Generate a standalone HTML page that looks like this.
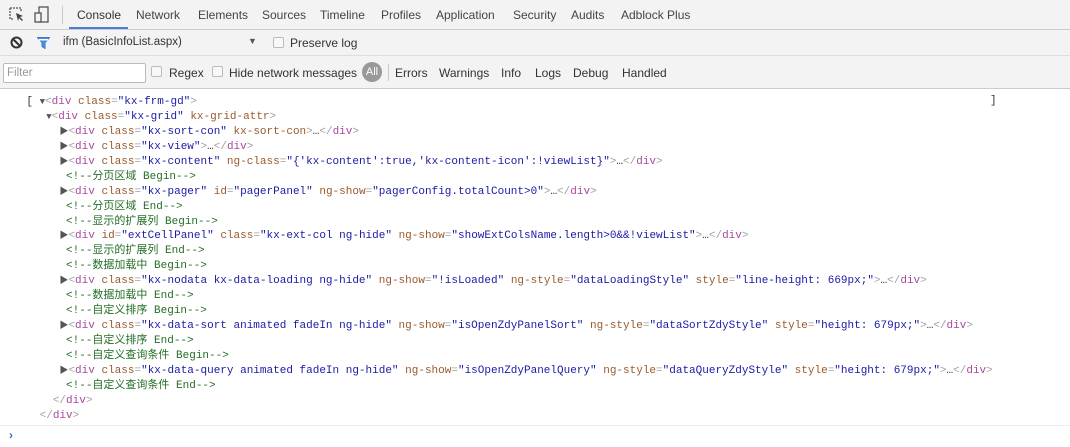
<!DOCTYPE html>
<html><head><meta charset="utf-8"><style>
*{margin:0;padding:0;box-sizing:border-box}
body{width:1070px;height:447px;overflow:hidden;background:#fff;font-family:"Liberation Sans","Noto Sans CJK SC",sans-serif;font-size:12px;color:#333;position:relative}
.bar1{position:absolute;left:0;top:0;width:1070px;height:30px;background:#f3f3f3;border-bottom:1px solid #ccc}
.bar2{position:absolute;left:0;top:30px;width:1070px;height:26px;background:#f3f3f3;border-bottom:1px solid #ddd}
.bar3{position:absolute;left:0;top:56px;width:1070px;height:33px;background:#f3f3f3;border-bottom:1px solid #ccc}
.t{position:absolute;white-space:nowrap;color:#333}
.cb{position:absolute;width:11px;height:11px;border:1px solid #bbb;background:#f8f8f8;border-radius:2px}
.code{position:absolute;left:0;top:95px;font-family:"Liberation Mono","Noto Sans CJK SC",monospace;font-size:11px;line-height:14.95px}
.l{position:relative;height:14.95px;white-space:pre}
.tg{color:#a8499f}.an{color:#9a5a2a}.av{color:#1a1aa6}.cm{color:#236e25}.br{color:#a0a0a0}
.ar{color:#555;font-size:9px}
</style></head><body>
<div class="bar1"></div>
<div class="bar2"></div>
<div class="bar3"></div>
<svg style="position:absolute;left:9px;top:7px" width="16" height="16" viewBox="0 0 16 16"><path d="M1 1h11v4M1 1v11h4" fill="none" stroke="#555" stroke-width="1.3" stroke-dasharray="2 1"/><path d="M7 6l7 3-3 1 3 3-1 1-3-3-1 3z" fill="#444"/></svg>
<svg style="position:absolute;left:34px;top:6px" width="16" height="18" viewBox="0 0 16 18"><rect x="5" y="1" width="9" height="15" fill="none" stroke="#555" stroke-width="1.3"/><rect x="1" y="7" width="6" height="9" fill="#f3f3f3" stroke="#555" stroke-width="1.3"/></svg>
<div style="position:absolute;left:62px;top:6px;width:1px;height:18px;background:#ccc"></div>
<div class="t" style="left:77px;top:8px">Console</div>
<div style="position:absolute;left:69px;top:27px;width:59px;height:2px;background:#4b7fd6"></div>
<div class="t" style="left:136px;top:8px;color:#444">Network</div>
<div class="t" style="left:198px;top:8px;color:#444">Elements</div>
<div class="t" style="left:262px;top:8px;color:#444">Sources</div>
<div class="t" style="left:320px;top:8px;color:#444">Timeline</div>
<div class="t" style="left:381px;top:8px;color:#444">Profiles</div>
<div class="t" style="left:436px;top:8px;color:#444">Application</div>
<div class="t" style="left:513px;top:8px;color:#444">Security</div>
<div class="t" style="left:571px;top:8px;color:#444">Audits</div>
<div class="t" style="left:621px;top:8px;color:#444">Adblock Plus</div>
<svg style="position:absolute;left:10px;top:36px" width="13" height="13" viewBox="0 0 13 13"><circle cx="6.5" cy="6.5" r="5" fill="none" stroke="#333" stroke-width="2"/><path d="M3 3l7 7" stroke="#333" stroke-width="2"/></svg>
<svg style="position:absolute;left:37px;top:37px" width="13" height="12" viewBox="0 0 13 12"><path d="M0.5 0.5h12l-4.5 5v6l-3-2v-4z" fill="#4a90e2" stroke="#3a7bd0"/><rect x="2" y="2" width="9" height="1.5" fill="#fff"/></svg>
<div class="t" style="left:63px;top:36px;font-size:11.5px">ifm (BasicInfoList.aspx)</div>
<div class="t" style="left:248px;top:36px;font-size:9px;color:#555">▼</div>
<div class="cb" style="left:273px;top:37px"></div>
<div class="t" style="left:290px;top:36px">Preserve log</div>
<div style="position:absolute;left:3px;top:63px;width:143px;height:20px;border:1px solid #bbb;background:#fff;border-radius:2px"></div>
<div class="t" style="left:7px;top:67px;color:#999;font-size:11.5px">Filter</div>
<div class="cb" style="left:151px;top:66px"></div>
<div class="t" style="left:169px;top:66px">Regex</div>
<div class="cb" style="left:212px;top:66px"></div>
<div class="t" style="left:229px;top:66px">Hide network messages</div>
<div style="position:absolute;left:362px;top:62px;width:20px;height:20px;border-radius:10px;background:#999;color:#fff;font-size:11px;text-align:center;line-height:20px">All</div>
<div style="position:absolute;left:388px;top:64px;width:1px;height:17px;background:#ccc"></div>
<div class="t" style="left:395px;top:66px">Errors</div>
<div class="t" style="left:439px;top:66px">Warnings</div>
<div class="t" style="left:501px;top:66px">Info</div>
<div class="t" style="left:535px;top:66px">Logs</div>
<div class="t" style="left:573px;top:66px">Debug</div>
<div class="t" style="left:622px;top:66px">Handled</div>
<div class="t" style="left:990px;top:95px;font-family:'Liberation Mono',monospace;font-size:11px">]</div>
<div class="code"><div class="l">    [ <span class="ar">▼</span><span class="br">&lt;</span><span class="tg">div</span> <span class="an">class</span><span class="br">=</span><span class="av">"kx-frm-gd"</span><span class="br">&gt;</span></div><div class="l">       <span class="ar">▼</span><span class="br">&lt;</span><span class="tg">div</span> <span class="an">class</span><span class="br">=</span><span class="av">"kx-grid"</span> <span class="an">kx-grid-attr</span><span class="br">&gt;</span></div><div class="l">         <span class="ar">▶</span><span class="br">&lt;</span><span class="tg">div</span> <span class="an">class</span><span class="br">=</span><span class="av">"kx-sort-con"</span> <span class="an">kx-sort-con</span><span class="br">&gt;</span>…<span class="br">&lt;/</span><span class="tg">div</span><span class="br">&gt;</span></div><div class="l">         <span class="ar">▶</span><span class="br">&lt;</span><span class="tg">div</span> <span class="an">class</span><span class="br">=</span><span class="av">"kx-view"</span><span class="br">&gt;</span>…<span class="br">&lt;/</span><span class="tg">div</span><span class="br">&gt;</span></div><div class="l">         <span class="ar">▶</span><span class="br">&lt;</span><span class="tg">div</span> <span class="an">class</span><span class="br">=</span><span class="av">"kx-content"</span> <span class="an">ng-class</span><span class="br">=</span><span class="av">"{'kx-content':true,'kx-content-icon':!viewList}"</span><span class="br">&gt;</span>…<span class="br">&lt;/</span><span class="tg">div</span><span class="br">&gt;</span></div><div class="l">          <span class="cm">&lt;!--分页区域 Begin--&gt;</span></div><div class="l">         <span class="ar">▶</span><span class="br">&lt;</span><span class="tg">div</span> <span class="an">class</span><span class="br">=</span><span class="av">"kx-pager"</span> <span class="an">id</span><span class="br">=</span><span class="av">"pagerPanel"</span> <span class="an">ng-show</span><span class="br">=</span><span class="av">"pagerConfig.totalCount&gt;0"</span><span class="br">&gt;</span>…<span class="br">&lt;/</span><span class="tg">div</span><span class="br">&gt;</span></div><div class="l">          <span class="cm">&lt;!--分页区域 End--&gt;</span></div><div class="l">          <span class="cm">&lt;!--显示的扩展列 Begin--&gt;</span></div><div class="l">         <span class="ar">▶</span><span class="br">&lt;</span><span class="tg">div</span> <span class="an">id</span><span class="br">=</span><span class="av">"extCellPanel"</span> <span class="an">class</span><span class="br">=</span><span class="av">"kx-ext-col ng-hide"</span> <span class="an">ng-show</span><span class="br">=</span><span class="av">"showExtColsName.length&gt;0&amp;&amp;!viewList"</span><span class="br">&gt;</span>…<span class="br">&lt;/</span><span class="tg">div</span><span class="br">&gt;</span></div><div class="l">          <span class="cm">&lt;!--显示的扩展列 End--&gt;</span></div><div class="l">          <span class="cm">&lt;!--数据加载中 Begin--&gt;</span></div><div class="l">         <span class="ar">▶</span><span class="br">&lt;</span><span class="tg">div</span> <span class="an">class</span><span class="br">=</span><span class="av">"kx-nodata kx-data-loading ng-hide"</span> <span class="an">ng-show</span><span class="br">=</span><span class="av">"!isLoaded"</span> <span class="an">ng-style</span><span class="br">=</span><span class="av">"dataLoadingStyle"</span> <span class="an">style</span><span class="br">=</span><span class="av">"line-height: 669px;"</span><span class="br">&gt;</span>…<span class="br">&lt;/</span><span class="tg">div</span><span class="br">&gt;</span></div><div class="l">          <span class="cm">&lt;!--数据加载中 End--&gt;</span></div><div class="l">          <span class="cm">&lt;!--自定义排序 Begin--&gt;</span></div><div class="l">         <span class="ar">▶</span><span class="br">&lt;</span><span class="tg">div</span> <span class="an">class</span><span class="br">=</span><span class="av">"kx-data-sort animated fadeIn ng-hide"</span> <span class="an">ng-show</span><span class="br">=</span><span class="av">"isOpenZdyPanelSort"</span> <span class="an">ng-style</span><span class="br">=</span><span class="av">"dataSortZdyStyle"</span> <span class="an">style</span><span class="br">=</span><span class="av">"height: 679px;"</span><span class="br">&gt;</span>…<span class="br">&lt;/</span><span class="tg">div</span><span class="br">&gt;</span></div><div class="l">          <span class="cm">&lt;!--自定义排序 End--&gt;</span></div><div class="l">          <span class="cm">&lt;!--自定义查询条件 Begin--&gt;</span></div><div class="l">         <span class="ar">▶</span><span class="br">&lt;</span><span class="tg">div</span> <span class="an">class</span><span class="br">=</span><span class="av">"kx-data-query animated fadeIn ng-hide"</span> <span class="an">ng-show</span><span class="br">=</span><span class="av">"isOpenZdyPanelQuery"</span> <span class="an">ng-style</span><span class="br">=</span><span class="av">"dataQueryZdyStyle"</span> <span class="an">style</span><span class="br">=</span><span class="av">"height: 679px;"</span><span class="br">&gt;</span>…<span class="br">&lt;/</span><span class="tg">div</span><span class="br">&gt;</span></div><div class="l">          <span class="cm">&lt;!--自定义查询条件 End--&gt;</span></div><div class="l">        <span class="br">&lt;/</span><span class="tg">div</span><span class="br">&gt;</span></div><div class="l">      <span class="br">&lt;/</span><span class="tg">div</span><span class="br">&gt;</span></div></div>
<div style="position:absolute;left:0;top:425px;width:1070px;height:1px;background:#eee"></div>
<div class="t" style="left:9px;top:428px;color:#3d6fc7;font-weight:bold;font-size:12px">›</div>
</body></html>
